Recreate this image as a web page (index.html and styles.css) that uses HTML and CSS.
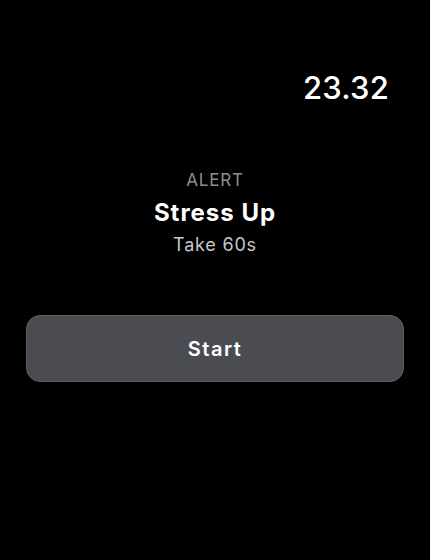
FILE: index.html
```html
<!DOCTYPE html>
<html>
<head>
<meta charset="utf-8">
<link rel="stylesheet" href="styles.css">
</head>
<body>
<div class="screen">
  <div class="topbar"><span class="time">23.32</span></div>
  <div class="alert">
    <div class="label">ALERT</div>
    <div class="title">Stress Up</div>
    <div class="sub">Take 60s</div>
  </div>
  <div class="actions">
    <button class="start">Start</button>
  </div>
</div>
</body>
</html>
```
FILE: styles.css
```css
html, body {
  margin: 0;
  padding: 0;
  background: #000;
}
.screen {
  width: 430px;
  height: 560px;
  background: #000;
  font-family: Inter, "Noto Sans", sans-serif;
  color: #fff;
  display: flex;
  flex-direction: column;
}
.topbar {
  display: flex;
  justify-content: flex-end;
  padding: 68px 41px 0 0;
  height: 40px;
}
.time {
  font-size: 31px;
  font-weight: 500;
  line-height: 40px;
  letter-spacing: 0.2px;
}
.alert {
  margin-top: 60px;
  display: flex;
  flex-direction: column;
  align-items: center;
}
.label {
  font-size: 17px;
  line-height: 24px;
  color: #8e8e93;
  letter-spacing: 0.8px;
}
.title {
  font-size: 24px;
  font-weight: 700;
  line-height: 32px;
  margin-top: 5px;
  letter-spacing: 1px;
}
.sub {
  font-size: 18px;
  line-height: 24px;
  color: #c7c7cc;
  margin-top: 4px;
  letter-spacing: 0.8px;
}
.actions {
  padding: 0 26px;
  margin-top: 58px;
}
.start {
  width: 100%;
  height: 67px;
  border-radius: 14px;
  background: #4b4c51;
  border: 1px solid #5e5f64;
  color: #fff;
  font-family: inherit;
  font-size: 20px;
  font-weight: 600;
  letter-spacing: 1.5px;
  padding: 0;
}
```
